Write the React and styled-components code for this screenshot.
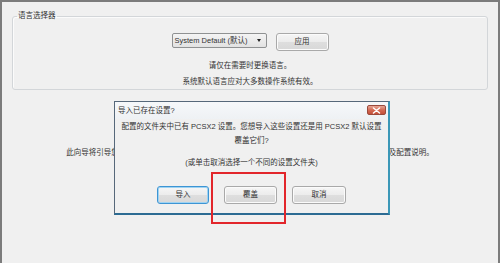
import React from "react";
import styled, { createGlobalStyle } from "styled-components";

const Global = createGlobalStyle`
  html, body { margin: 0; padding: 0; background: #f0f0f0; }
  body {
    font-family: "Liberation Sans", "Noto Sans CJK SC", sans-serif;
    font-size: 7.5px;
    color: #333333;
  }
`;

const Frame = styled.div`
  position: relative;
  box-sizing: border-box;
  min-height: 263px;
  border: 2px solid #7c7c7c;
  border-bottom: none;
  padding: 9px 10px 0 10px;
  background: #f0f0f0;
  overflow: hidden;
`;

const GroupBox = styled.fieldset`
  margin: 0;
  padding: 0;
  border: 1px solid #d3d6d9;
  border-radius: 3px;
  box-shadow: inset 1px 1px 0 #fbfbfb;
  display: flex;
  flex-direction: column;
  align-items: center;
`;

const Legend = styled.legend`
  margin-left: 4px;
  padding: 0 1px;
  line-height: 10px;
  font-size: 7.5px;
`;

const ControlRow = styled.div`
  display: flex;
  align-items: flex-start;
  gap: 9px;
  margin-top: 12px;
  margin-bottom: 7px;
`;

const Select = styled.div`
  box-sizing: border-box;
  width: 95px;
  height: 15px;
  border: 1px solid #8f9192;
  border-radius: 2px;
  background: linear-gradient(#f4f4f4, #e2e2e2);
  display: flex;
  align-items: center;
  justify-content: space-between;
  padding: 0 5px 0 2px;
  line-height: 13px;
  white-space: nowrap;
`;

const Arrow = styled.span`
  width: 0;
  height: 0;
  border-left: 2.5px solid transparent;
  border-right: 2.5px solid transparent;
  border-top: 3px solid #222;
`;

const Button = styled.div`
  box-sizing: border-box;
  width: ${(p) => p.$w || 53}px;
  height: 18px;
  border: 1px solid ${(p) => (p.$default ? "#3d95d4" : "#a9a9a9")};
  border-radius: 3px;
  background: linear-gradient(#f6f6f6 0%, #ececec 48%, #dedede 52%, #d8d8d8 100%);
  box-shadow: ${(p) =>
    p.$default ? "inset 0 0 0 1px #9fd3f2" : "inset 0 0 0 1px #fbfbfb"};
  display: flex;
  align-items: center;
  justify-content: center;
  line-height: 16px;
`;

const Note = styled.div`
  line-height: 15.5px;
  text-align: center;
`;

const WizardText = styled.div`
  margin-top: 55px;
  line-height: 15px;
  text-align: center;
  white-space: nowrap;
`;

const Dialog = styled.div`
  position: absolute;
  left: 112px;
  top: 99px;
  width: 276px;
  height: 114px;
  box-sizing: border-box;
  border: 1px solid #56687a;
  border-right: 2px solid #3b97b7;
  border-bottom: 2px solid #2c6b93;
  background: #f0f0f0;
  display: flex;
  flex-direction: column;
`;

const TitleBar = styled.div`
  position: relative;
  height: 17px;
  display: flex;
  align-items: center;
  padding-left: 3px;
  background: linear-gradient(#f6f8fa, #eef1f4);
  line-height: 17px;
`;

const CloseButton = styled.div`
  position: absolute;
  right: 2px;
  top: 3px;
  width: 19px;
  height: 10px;
  box-sizing: border-box;
  border: 1px solid #9a4a3c;
  border-radius: 2px;
  background: linear-gradient(#e6a595, #d46a54 50%, #c4503a);
  display: flex;
  align-items: center;
  justify-content: center;
`;

const DialogBody = styled.div`
  display: flex;
  flex-direction: column;
  align-items: center;
  padding-top: 1px;
`;

const MessageLine = styled.div`
  line-height: 14px;
  text-align: center;
  white-space: nowrap;
  margin-top: ${(p) => p.$gap || 0}px;
`;

const ButtonRow = styled.div`
  display: flex;
  gap: 15px;
  margin-top: 16px;
`;

const Highlight = styled.div`
  position: absolute;
  left: 209px;
  top: 170px;
  width: 75px;
  height: 52px;
  box-sizing: border-box;
  border: 2px solid #e2262b;
`;

export default function App() {
  return (
    <>
      <Global />
      <Frame>
        <GroupBox>
          <Legend>语言选择器</Legend>
          <ControlRow>
            <Select>
              <span>System Default (默认)</span>
              <Arrow />
            </Select>
            <Button>应用</Button>
          </ControlRow>
          <Note>请仅在需要时更换语言。</Note>
          <Note>系统默认语言应对大多数操作系统有效。</Note>
        </GroupBox>
        <WizardText>
          此向导将引导您完成插件和文件夹的初始设置，请参阅相关文档以获取关于插件选择的详细信息以及配置说明。
        </WizardText>

        <Dialog>
          <TitleBar>
            导入已存在设置?
            <CloseButton>
              <svg width="9" height="7" viewBox="0 0 9 7">
                <path
                  d="M1.5 1 L7.5 6 M7.5 1 L1.5 6"
                  stroke="#fff"
                  strokeWidth="1.5"
                  strokeLinecap="round"
                />
              </svg>
            </CloseButton>
          </TitleBar>
          <DialogBody>
            <MessageLine>
              配置的文件夹中已有 PCSX2 设置。您想导入这些设置还是用 PCSX2 默认设置
            </MessageLine>
            <MessageLine>覆盖它们?</MessageLine>
            <MessageLine $gap={8}>(或单击取消选择一个不同的设置文件夹)</MessageLine>
            <ButtonRow>
              <Button $default $w={52}>导入</Button>
              <Button $w={53}>覆盖</Button>
              <Button $w={54}>取消</Button>
            </ButtonRow>
          </DialogBody>
        </Dialog>
        <Highlight />
      </Frame>
    </>
  );
}
